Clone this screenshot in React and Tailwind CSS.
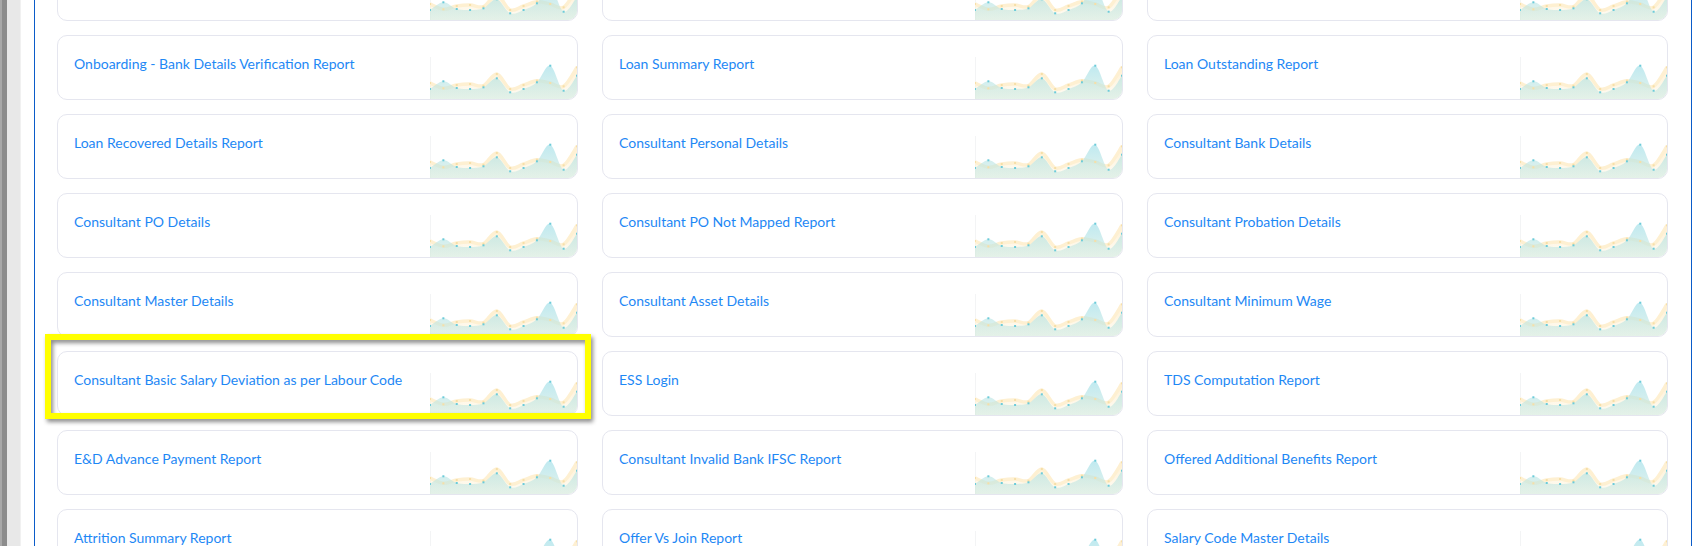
import { useId } from 'react'

const REPORTS = [
  '', '', '',
  'Onboarding - Bank Details Verification Report', 'Loan Summary Report', 'Loan Outstanding Report',
  'Loan Recovered Details Report', 'Consultant Personal Details', 'Consultant Bank Details',
  'Consultant PO Details', 'Consultant PO Not Mapped Report', 'Consultant Probation Details',
  'Consultant Master Details', 'Consultant Asset Details', 'Consultant Minimum Wage',
  'Consultant Basic Salary Deviation as per Labour Code', 'ESS Login', 'TDS Computation Report',
  'E&D Advance Payment Report', 'Consultant Invalid Bank IFSC Report', 'Offered Additional Benefits Report',
  'Attrition Summary Report', 'Offer Vs Join Report', 'Salary Code Master Details',
]

const HIGHLIGHTED = 'Consultant Basic Salary Deviation as per Labour Code'

const CHART_W = 147
const CHART_H = 42
const STEP = CHART_W / 11

const cyan = [32, 24.3, 31, 32, 30.3, 21.3, 35.3, 32, 25.3, 8.7, 33.7, 18.7]
const amber = [26, 31.3, 28, 27, 28.7, 17, 32, 28, 23.7, 26, 29.3, 10.3]

// catmull-rom through the points, as cubic beziers
const linePath = (ys) => {
  const pts = ys.map((y, i) => [i * STEP, y])
  let d = `M${pts[0][0]},${pts[0][1]}`
  for (let i = 0; i < pts.length - 1; i++) {
    const p0 = pts[i - 1] || pts[i]
    const p1 = pts[i]
    const p2 = pts[i + 1]
    const p3 = pts[i + 2] || p2
    const c1 = [p1[0] + (p2[0] - p0[0]) / 6, p1[1] + (p2[1] - p0[1]) / 6]
    const c2 = [p2[0] - (p3[0] - p1[0]) / 6, p2[1] - (p3[1] - p1[1]) / 6]
    d += ` C${c1[0].toFixed(2)},${c1[1].toFixed(2)} ${c2[0].toFixed(2)},${c2[1].toFixed(2)} ${p2[0].toFixed(2)},${p2[1]}`
  }
  return d
}

const areaPath = (ys) => `${linePath(ys)} L${CHART_W},${CHART_H} L0,${CHART_H} Z`

const cyanLine = linePath(cyan)
const cyanArea = areaPath(cyan)
const amberLine = linePath(amber)
const amberArea = areaPath(amber)

const Sparkline = () => {
  const id = useId().replace(/:/g, '')
  return (
    <svg width={CHART_W} height={CHART_H} viewBox={`0 0 ${CHART_W} ${CHART_H}`} className="block shrink-0 self-end">
      <defs>
        <linearGradient id={`a${id}`} x1="0" y1="0" x2="0" y2="1">
          <stop offset="0" stopColor="#fee9bd" stopOpacity="0.7" />
          <stop offset="1" stopColor="#fdf3dc" stopOpacity="0.3" />
        </linearGradient>
        <linearGradient id={`c${id}`} x1="0" y1="0" x2="0" y2="1">
          <stop offset="0" stopColor="#a3e0ea" stopOpacity="0.7" />
          <stop offset="1" stopColor="#cfe9de" stopOpacity="0.55" />
        </linearGradient>
      </defs>
      <line x1="0.5" y1="0" x2="0.5" y2={CHART_H} stroke="#f3f4f5" strokeWidth="1" />
      <path d={amberArea} fill={`url(#a${id})`} />
      <path d={amberLine} fill="none" stroke="#fef0d2" strokeWidth="3.5" />
      <path d={cyanArea} fill={`url(#c${id})`} />
      {amber.map((y, i) => (
        <rect key={`a${i}`} x={i * STEP - 1} y={y - 1} width="2" height="2" fill="#f6dfa8" />
      ))}
      {cyan.map((y, i) => (
        <rect key={`c${i}`} x={i * STEP - 1} y={y - 1} width="2" height="2" fill="#6ccbd9" />
      ))}
    </svg>
  )
}

const ReportCard = ({ title }) => (
  <div className="relative">
    <div className="flex h-[65px] justify-between overflow-hidden rounded-[10px] border border-[#e5e6ef] bg-white">
      <span className="self-start pl-4 pt-[18px] text-[14px] leading-5 text-[#1e88f5]">{title}</span>
      <Sparkline />
    </div>
    {title === HIGHLIGHTED && (
      <div className="pointer-events-none absolute -top-[17px] -left-[12px] -right-[13px] -bottom-[3px] z-10 border-[6px] border-[#ffff00] drop-shadow-[2px_3px_2px_rgba(0,0,0,0.45)]" />
    )}
  </div>
)

export default function App() {
  return (
    <div className="flex h-[546px] overflow-hidden bg-white font-['Lato',sans-serif]">
      <div className="flex w-[21px] shrink-0">
        <div className="w-[2px] bg-[#a8a8a8]" />
        <div className="w-[5px] bg-[#8c8c8c]" />
        <div className="w-[13px] bg-[#e8e8e8]" />
        <div className="w-[1px] bg-[#f1f1f1]" />
      </div>
      <div className="w-[13px] shrink-0" />
      <div className="w-[1658px] shrink-0 border-x border-[#0b5cc9] pl-[22px] pr-[23px]">
        <div className="-mt-[44px] grid grid-cols-3 gap-x-[24px] gap-y-[14px]">
          {REPORTS.map((title, i) => (
            <ReportCard key={`report-${i}`} title={title} />
          ))}
        </div>
      </div>
    </div>
  )
}
